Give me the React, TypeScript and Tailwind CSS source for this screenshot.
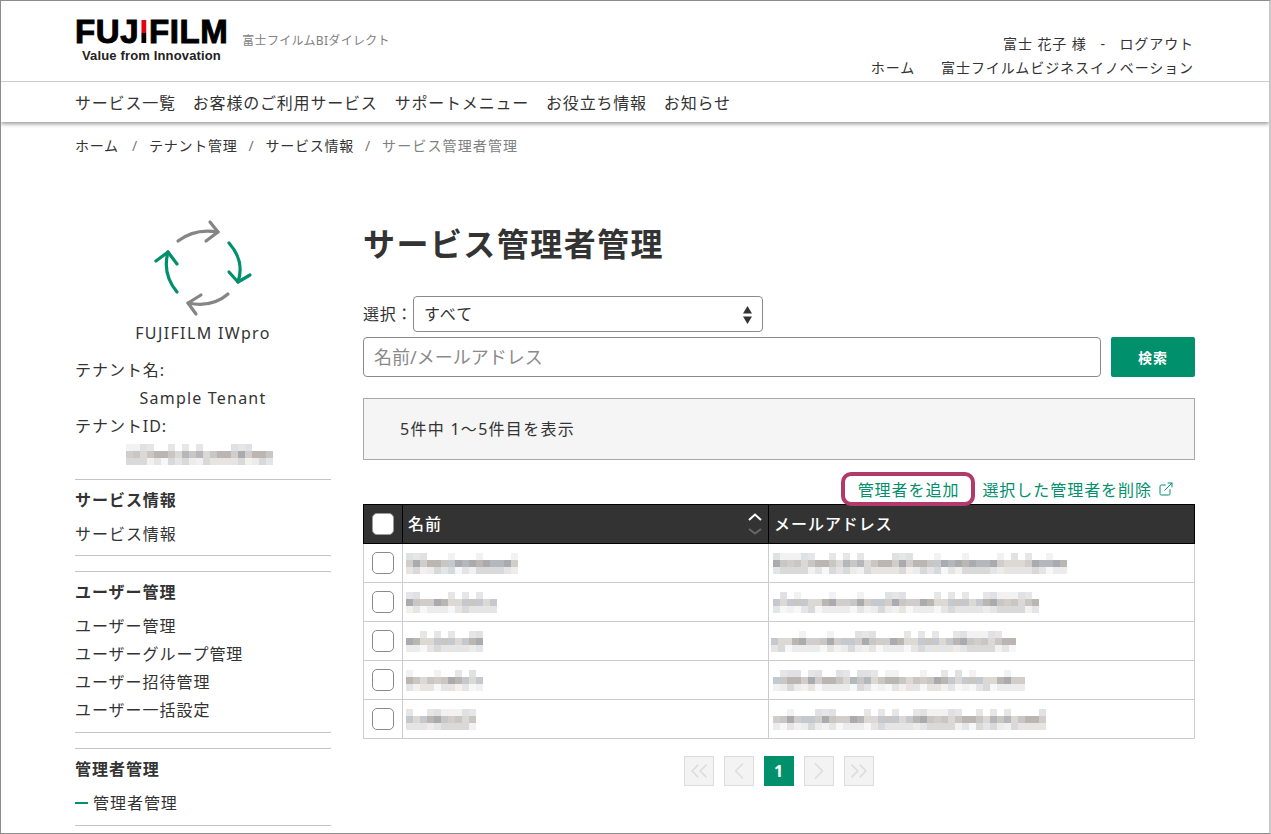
import { ChevronsLeft, ChevronLeft, ChevronRight, ChevronsRight, ExternalLink } from "lucide-react";

const TOP_LINKS = ["サービス一覧", "お客様のご利用サービス", "サポートメニュー", "お役立ち情報", "お知らせ"];

const ROWS = [
  { name: 110, email: 292, offset: 4, seed: 3 },
  { name: 91, email: 264, offset: 4, seed: 11 },
  { name: 77, email: 246, offset: 2, seed: 23 },
  { name: 77, email: 250, offset: 4, seed: 37 },
  { name: 70, email: 276, offset: 4, seed: 41 },
];

const MID = ["#c9c7c4", "#a9abae", "#c4c9cf", "#d2cdcb", "#b4b8bd", "#dcd9d4", "#bcb6b2"];
const LOW = ["#ececec", "#e3e5e7", "#f3f1f0", "#d9d9d9", "#e8e4e2", "#f6f7f8"];
const HIGH = ["#ffffff", "#e6e6e6", "#ffffff", "#dfe1e4", "#ffffff", "#f2f2f2", "#ffffff"];

function pick(list: string[], n: number) {
  return list[(n * n * 31 + n * 17) % 101 % list.length];
}

// pixelated stand-in for the masked personal data
function Mosaic({ width, seed }: { width: number; seed: number }) {
  const count = Math.round(width / 7);
  const cells = Array.from({ length: count }, (_, i) => i);
  return (
    <div className="flex flex-col">
      {[HIGH, MID, LOW].map((list, r) => (
        <div key={r} className="flex h-[7px]">
          {cells.map((i) => (
            <span key={i} className="h-[7px] w-[7px]" style={{ backgroundColor: pick(list, seed + i * 3 + r * 5 + 1) }} />
          ))}
        </div>
      ))}
    </div>
  );
}

function ArrowsLogo() {
  return (
    <svg width="104" height="100" viewBox="151 220 104 100" fill="none" strokeWidth="3.2" strokeLinecap="round" strokeLinejoin="round">
      <g stroke="#858585">
        <path d="M178 242 Q195 229 218 233" />
        <path d="M210 223 L218 233 L206 242" />
        <path d="M228 295 Q212 309 188 304" />
        <path d="M201 296 L188 304 L196 315" />
      </g>
      <g stroke="#00906c">
        <path d="M229 244 Q245 262 238 283" />
        <path d="M229 273 L238 283 L250 276" />
        <path d="M177 293 Q162 275 168 253" />
        <path d="M156 262 L168 253 L177 265" />
      </g>
    </svg>
  );
}

function SideSection({ title, items, active }: { title: string; items: string[]; active?: boolean }) {
  return (
    <section className="mb-[15px] border-y border-[#c4c4c4] pt-[8px] pb-[8px] first:pb-[7px]">
      <h3 className="mb-[8px] text-[16px] leading-[24px] font-bold">{title}</h3>
      {items.map((item) => (
        <p key={item} className="flex h-[28px] items-center text-[16px]">
          {active && <span className="mr-[5px] h-[2px] w-[13px] bg-[#00906c]" />}
          {item}
        </p>
      ))}
    </section>
  );
}

function PageBox({ children }: { children: React.ReactNode }) {
  return (
    <span className="flex h-[30px] w-[30px] items-center justify-center border border-[#dcdcdc] bg-[#f3f3f3] text-[#dddddd]">
      {children}
    </span>
  );
}

export default function App() {
  return (
    <div className="h-[834px] overflow-hidden border-t border-r-2 border-b border-l border-t-[#8c8c8c] border-r-[#c8c8c8] border-b-[#8c8c8c] border-l-[#8c8c8c] bg-white font-['Noto_Sans','Noto_Sans_CJK_JP',sans-serif] tracking-[.06em] text-[#333333]">
      <header className="relative z-10 bg-white shadow-[0_2px_4px_rgba(0,0,0,.4)]">
        <div className="flex h-[81px] justify-between border-b border-[#cccccc] pr-[75px] pl-[74px]">
          <div className="flex items-start">
            <div className="pt-[13px]">
              <div className="h-[33px] font-['Liberation_Sans',sans-serif] text-[33px] leading-[36px] font-bold tracking-[.6px] text-black [-webkit-text-stroke:1px_#000]">
                FUJ
                <span className="bg-[linear-gradient(#e60012_0_55%,#000_55%)] bg-clip-text text-transparent [-webkit-text-stroke:0]">I</span>
                FILM
              </div>
              <p className="mt-[1px] pl-[7px] font-['Liberation_Sans',sans-serif] text-[13px] leading-[16px] font-bold tracking-[.15px] text-[#222222]">
                Value from Innovation
              </p>
            </div>
            <p className="mt-[31px] ml-[14px] text-[12px] leading-[18px] tracking-[.3px] text-[#808080]">富士フイルムBIダイレクト</p>
          </div>
          <div className="flex flex-col items-end pt-[31px] text-[14px] leading-[24px] tracking-[.065em]">
            <p className="whitespace-pre">富士 花子 様   -   ログアウト</p>
            <p className="flex gap-[26px]">
              <span>ホーム</span>
              <span>富士フイルムビジネスイノベーション</span>
            </p>
          </div>
        </div>
        <nav className="flex h-[40px] items-center gap-[17px] pt-[1px] pl-[74px] text-[16px] tracking-[.05em]">
          {TOP_LINKS.map((link) => (
            <span key={link}>{link}</span>
          ))}
        </nav>
      </header>

      <div className="flex h-[47px] items-center gap-[11px] pl-[74px] text-[14px] tracking-[.055em] whitespace-pre">
        <span>ホーム</span>
        <span className="pl-[2px] text-[#777777]">/</span>
        <span>テナント管理</span>
        <span className="text-[#777777]">/</span>
        <span>サービス情報</span>
        <span className="text-[#777777]">/</span>
        <span className="tracking-[.08em] text-[#808080]">サービス管理者管理</span>
      </div>

      <div className="flex gap-[32px] pr-[74px] pl-[74px]">
        <aside className="w-[256px] shrink-0 pt-[50px]">
          <div className="flex justify-center">
            <ArrowsLogo />
          </div>
          <p className="mt-[2px] text-center text-[16px] leading-[24px] tracking-[.085em]">FUJIFILM IWpro</p>
          <div className="mt-[11px] mb-[11px] text-[16px] leading-[28px]">
            <p>テナント名:</p>
            <p className="text-center tracking-[.075em]">Sample Tenant</p>
            <p>テナントID:</p>
            <div className="flex h-[28px] items-center justify-center pr-[7px]">
              <Mosaic width={147} seed={59} />
            </div>
          </div>
          <div>
            <SideSection title="サービス情報" items={["サービス情報"]} />
            <SideSection title="ユーザー管理" items={["ユーザー管理", "ユーザーグループ管理", "ユーザー招待管理", "ユーザー一括設定"]} />
            <SideSection title="管理者管理" items={["管理者管理"]} active />
          </div>
        </aside>

        <main className="min-w-0 flex-1 pt-[53px]">
          <h1 className="text-[32px] leading-[44px] font-bold tracking-[.045em]">サービス管理者管理</h1>

          <div className="mt-[30px] flex items-center">
            <label className="w-[50px] shrink-0 text-[16px] tracking-[.04em] whitespace-pre">選択：</label>
            <div className="relative">
              <select className="h-[36px] w-[350px] appearance-none rounded-[4px] border border-[#8a8a8a] bg-white pl-[10px] text-[16px] tracking-[.06em]">
                <option>すべて</option>
              </select>
              <svg className="absolute top-[10px] right-[11px]" width="9" height="18" viewBox="0 0 9 18" fill="#333333">
                <path d="M4.5 0 L9 7.5 L0 7.5 Z" />
                <path d="M4.5 18 L9 10.5 L0 10.5 Z" />
              </svg>
            </div>
          </div>

          <div className="mt-[5px] flex gap-[10px]">
            <input
              placeholder="名前/メールアドレス"
              className="h-[40px] flex-1 rounded-[4px] border border-[#8a8a8a] bg-white pl-[10px] text-[18px] tracking-normal placeholder:text-[#8a8a8a]"
            />
            <button className="h-[40px] w-[84px] rounded-[2px] bg-[#00906c] text-[14px] font-bold text-white">検索</button>
          </div>

          <div className="mt-[21px] flex h-[62px] items-center border border-[#a8a8a8] bg-[#f5f5f5] pl-[36px] text-[16px] tracking-[.08em]">
            5件中 1〜5件目を表示
          </div>

          <div className="relative z-10 mt-[12px] -mb-[2px] flex h-[34px] items-center justify-end pr-[21px] text-[16px] text-[#00906c]">
            <a className="flex h-[34px] items-center rounded-[10px] border-[4px] border-[#b13a6b] bg-white pt-[2px] pr-[12px] pl-[13px]">管理者を追加</a>
            <a className="ml-[7px] pt-[2px]">選択した管理者を削除</a>
            <ExternalLink className="ml-[6px]" size={16} strokeWidth={1.5} />
          </div>

          <table className="w-full border-collapse text-[16px]">
            <thead>
              <tr className="h-[39px] bg-[#333333] text-left text-white">
                <th className="w-[39px] border border-black">
                  <span className="mx-auto block h-[22px] w-[22px] rounded-[5px] border border-[#999999] bg-white" />
                </th>
                <th className="w-[366px] border border-black pl-[5px] font-medium">
                  <div className="flex items-center justify-between pr-[6px]">
                    名前
                    <svg width="14" height="22" viewBox="0 0 14 22" fill="none" strokeWidth="2">
                      <path d="M1 7 L7 1.5 L13 7" stroke="#ffffff" />
                      <path d="M1 16 L7 20.5 L13 16" stroke="#666666" />
                    </svg>
                  </div>
                </th>
                <th className="border border-black pl-[5px] font-medium">メールアドレス</th>
              </tr>
            </thead>
            <tbody>
              {ROWS.map((row) => (
                <tr key={row.seed} className="h-[39px]">
                  <td className="border border-[#cccccc]">
                    <span className="mx-auto block h-[22px] w-[22px] rounded-[5px] border border-[#8a8a8a] bg-white" />
                  </td>
                  <td className="border border-[#cccccc] pl-[3px]">
                    <Mosaic width={row.name} seed={row.seed} />
                  </td>
                  <td className="border border-[#cccccc]" style={{ paddingLeft: row.offset }}>
                    <Mosaic width={row.email} seed={row.seed + 50} />
                  </td>
                </tr>
              ))}
            </tbody>
          </table>

          <div className="mt-[17px] flex justify-center gap-[10px]">
            <PageBox><ChevronsLeft size={28} strokeWidth={1.5} /></PageBox>
            <PageBox><ChevronLeft size={28} strokeWidth={1.5} /></PageBox>
            <span className="flex h-[30px] w-[30px] items-center justify-center bg-[#00906c] text-[16px] font-bold text-white">1</span>
            <PageBox><ChevronRight size={28} strokeWidth={1.5} /></PageBox>
            <PageBox><ChevronsRight size={28} strokeWidth={1.5} /></PageBox>
          </div>
        </main>
      </div>
    </div>
  );
}
